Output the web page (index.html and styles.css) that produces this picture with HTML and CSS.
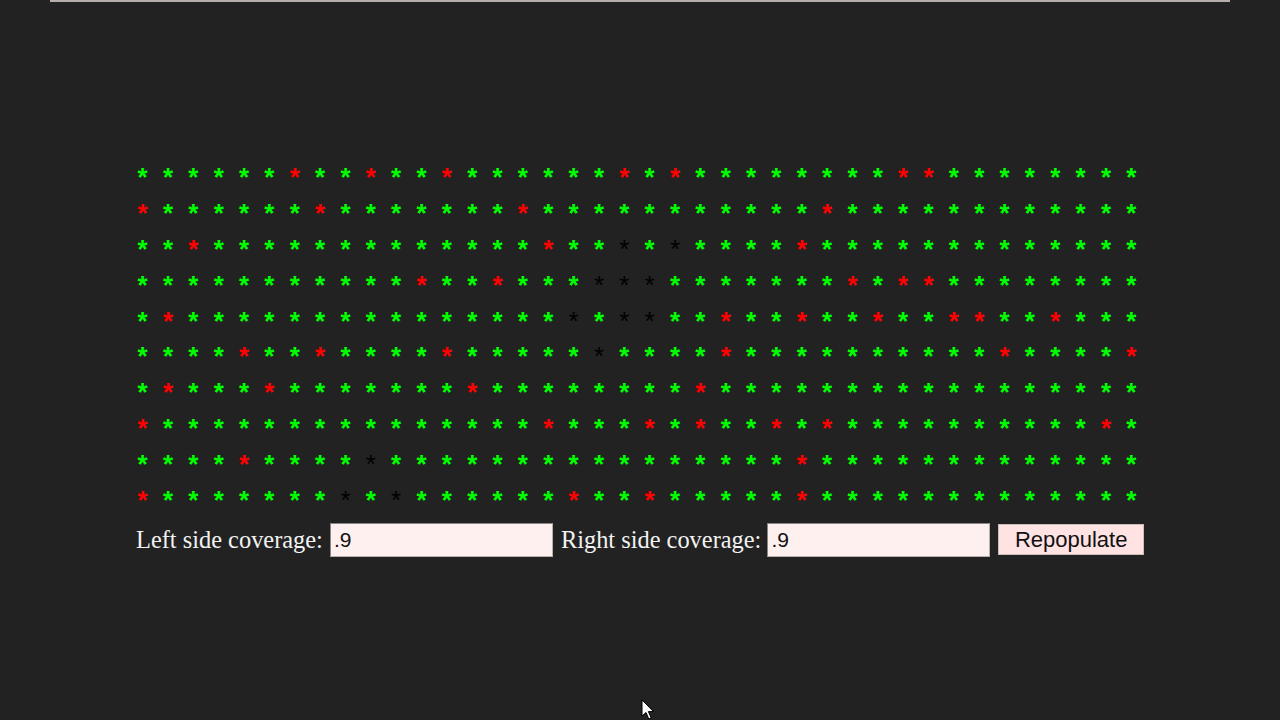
FILE: index.html
```html
<!DOCTYPE html>
<html lang="en">
<head>
<meta charset="utf-8">
<title>Coverage</title>
<link rel="stylesheet" href="styles.css">
</head>
<body>
<div class="topbar"></div>
<main class="board">
  <div class="field" id="field"></div>
  <div class="controls">
    <label class="caption" for="left-coverage">Left side coverage:</label>
    <input class="coverage" id="left-coverage" type="text" value=".9">
    <label class="caption" for="right-coverage">Right side coverage:</label>
    <input class="coverage" id="right-coverage" type="text" value=".9">
    <button class="repopulate" type="button">Repopulate</button>
  </div>
</main>
<svg class="pointer" width="14" height="22" viewBox="0 0 14 22" aria-hidden="true">
  <path d="M1 1 L1 17 L5 13.5 L7.8 20 L10.2 19 L7.4 12.6 L12.5 12.6 Z" fill="#fff" stroke="#000" stroke-width="1" stroke-linejoin="round"/>
</svg>
<script src="script.js"></script>
</body>
</html>
```

FILE: styles.css
```css
html, body {
  margin: 0;
  background: #222222;
}

body {
  font-family: "Liberation Serif", "Times New Roman", serif;
  color: #f2f2f2;
  height: 720px;
  overflow: hidden;
}

.topbar {
  width: 1180px;
  height: 2px;
  margin-left: 50px;
  background: #b8adad;
}

.board {
  width: 1014px;
  margin: 158px 0 0 130px;
}

.field {
  display: grid;
  grid-template-columns: repeat(40, 1fr);
  grid-auto-rows: 35.9px;
}

.star {
  font: bold 26px/35.9px "Liberation Sans", Arial, sans-serif;
  text-align: center;
}

.star.on { color: #00ff00; }
.star.hit { color: #ff0000; }
.star.off { color: #000000; font-weight: normal; }

.controls {
  display: flex;
  align-items: center;
  margin-top: 4px;
  padding-left: 6px;
  font-size: 24.4px;
}

.caption {
  white-space: nowrap;
}

.coverage {
  box-sizing: border-box;
  width: 223px;
  height: 34px;
  margin: 0 8px 0 7px;
  padding: 0 3px;
  border: 1px solid #b9b0b0;
  border-top-color: #8a8484;
  border-left-color: #8a8484;
  background: #fff0f0;
  font: 21px "Liberation Sans", Arial, sans-serif;
  color: #111;
}

.coverage + .caption + .coverage {
  margin-left: 6px;
}

.repopulate {
  box-sizing: border-box;
  height: 31px;
  width: 146px;
  padding: 0;
  border: 1px solid #c9bcbc;
  background: #ffe2e2;
  font: 22px "Liberation Sans", Arial, sans-serif;
  color: #111;
}

.pointer {
  position: absolute;
  left: 641px;
  top: 699px;
}
```

FILE: script.js
```js
// Columns (0-39) of the red and black marks in each of the ten rows;
// every other cell is green.
const hits = [
  [6, 9, 12, 19, 21, 30, 31],
  [0, 7, 15, 27],
  [2, 16, 26],
  [11, 14, 28, 30, 31],
  [1, 23, 26, 29, 32, 33, 36],
  [4, 7, 12, 23, 34, 39],
  [1, 5, 13, 22],
  [0, 16, 20, 22, 25, 27, 38],
  [4, 26],
  [0, 17, 20, 26]
];
const gaps = [
  [],
  [],
  [19, 21],
  [18, 19, 20],
  [17, 19, 20],
  [18],
  [],
  [],
  [9],
  [8, 10]
];

const field = document.getElementById('field');
for (let r = 0; r < 10; r++) {
  for (let c = 0; c < 40; c++) {
    const cell = document.createElement('span');
    let state = 'on';
    if (hits[r].includes(c)) state = 'hit';
    else if (gaps[r].includes(c)) state = 'off';
    cell.className = 'star ' + state;
    cell.textContent = '*';
    field.appendChild(cell);
  }
}
```
